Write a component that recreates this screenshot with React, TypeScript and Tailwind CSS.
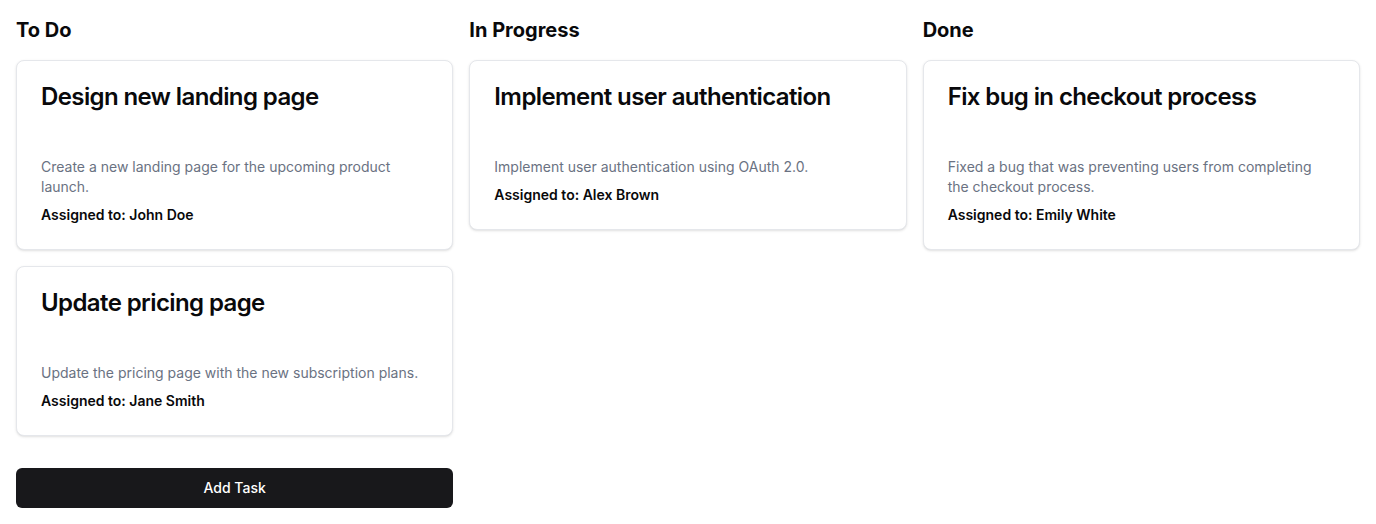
const columns = [
  {
    name: "To Do",
    tasks: [
      {
        title: "Design new landing page",
        description: "Create a new landing page for the upcoming product launch.",
        assignee: "John Doe",
      },
      {
        title: "Update pricing page",
        description: "Update the pricing page with the new subscription plans.",
        assignee: "Jane Smith",
      },
    ],
    showAdd: true,
  },
  {
    name: "In Progress",
    tasks: [
      {
        title: "Implement user authentication",
        description: "Implement user authentication using OAuth 2.0.",
        assignee: "Alex Brown",
      },
    ],
  },
  {
    name: "Done",
    tasks: [
      {
        title: "Fix bug in checkout process",
        description: "Fixed a bug that was preventing users from completing the checkout process.",
        assignee: "Emily White",
      },
    ],
  },
];

type Task = { title: string; description: string; assignee: string };

function TaskCard({ task }: { task: Task }) {
  return (
    <div className="rounded-lg border border-gray-200 bg-white text-[#09090b] shadow-sm">
      <div className="flex flex-col space-y-1.5 p-6">
        <h3 className="text-2xl font-semibold leading-none tracking-tight">{task.title}</h3>
      </div>
      <div className="p-6">
        <p className="text-sm text-gray-500">{task.description}</p>
        <p className="mt-2 text-sm font-semibold">Assigned to: {task.assignee}</p>
      </div>
    </div>
  );
}

export default function App() {
  return (
    <div className="min-h-screen bg-white font-['Inter',sans-serif] text-[#09090b]">
      <div className="grid grid-cols-3 gap-4 p-4">
        {columns.map((col) => (
          <div key={col.name}>
            <h2 className="mb-4 text-xl font-bold">{col.name}</h2>
            <div className="space-y-4">
              {col.tasks.map((task) => (
                <TaskCard key={task.title} task={task} />
              ))}
            </div>
            {col.showAdd && (
              <button className="mt-8 h-10 w-full rounded-md bg-[#18181b] px-4 text-sm font-medium text-white">
                Add Task
              </button>
            )}
          </div>
        ))}
      </div>
    </div>
  );
}
